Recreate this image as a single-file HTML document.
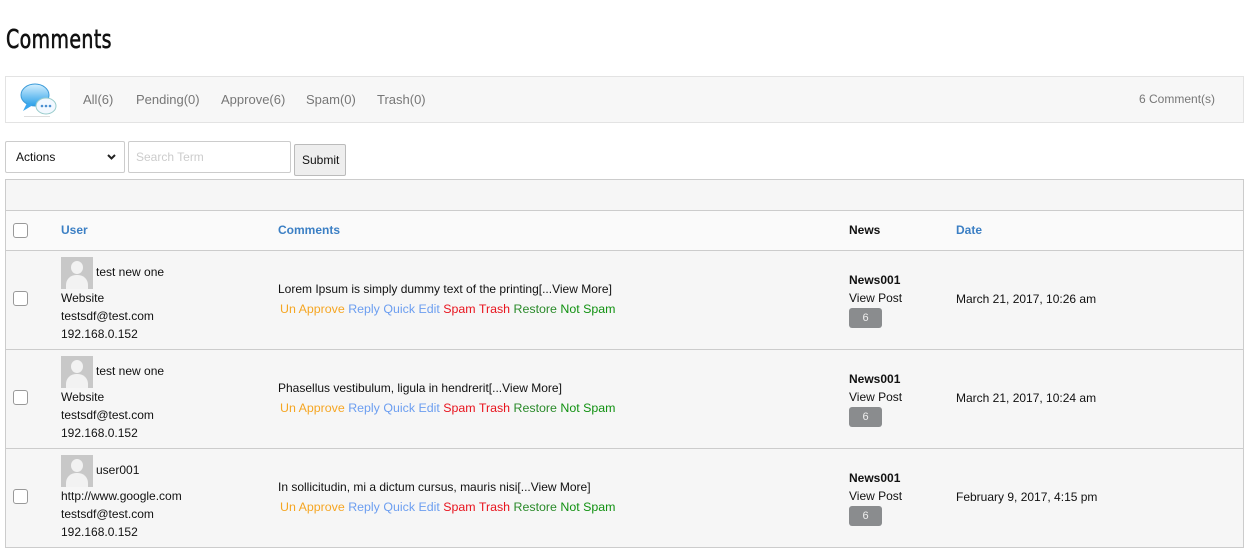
<!DOCTYPE html>
<html><head><style>
body{margin:0;width:1260px;height:548px;background:#fff;font-family:"Liberation Sans",sans-serif;font-size:12px;color:#111;position:relative;overflow:hidden}
.a{position:absolute;white-space:nowrap;line-height:14px}
h1{position:absolute;left:6px;top:25px;margin:0;font-family:"DejaVu Sans Condensed","Liberation Sans Narrow",sans-serif;font-weight:normal;font-size:26px;letter-spacing:0.5px;color:#111;-webkit-text-stroke:0.6px #111;transform:scaleX(0.81);transform-origin:left}
.nav{position:absolute;left:5px;top:76px;width:1237px;height:45px;background:#f7f7f7;border:1px solid #e3e3e3}
.nav .l{position:absolute;top:15px;color:#777;font-size:13px}
.tbl{position:absolute;left:5px;top:179px;width:1237px;height:367px;border:1px solid #ccc;background:#f6f6f6}
.hl{position:absolute;left:0;width:1237px;height:1px;background:#ccc}
.cb{position:absolute;width:13px;height:13px;border:1px solid #999;border-radius:3px;background:#fff}
.av{position:absolute;width:32px;height:32px;background:#c8c8c8;overflow:hidden}
.av:before{content:"";position:absolute;left:10px;top:4px;width:12px;height:13px;border-radius:50%;background:#f2f2f2}
.av:after{content:"";position:absolute;left:5px;top:18px;width:22px;height:20px;border-radius:10px 10px 0 0;background:#f2f2f2}
.bd{position:absolute;width:33px;height:20px;background:#8a8c8e;border-radius:3px;color:#eee;text-align:center;line-height:20px;font-size:11px}
.o{color:#f5a623}.b{color:#6c9ef0}.r{color:#e8141e}.g{color:#2a8a2a}.g2{color:#119111}
.act{font-size:12.4px}
</style></head><body>
<h1>Comments</h1>
<div class="nav">
<div style="position:absolute;left:0;top:0;width:64px;height:45px;background:#fff"></div>
<svg style="position:absolute;left:12px;top:3px" width="40" height="40" viewBox="0 0 40 40">
<defs><linearGradient id="g1" x1="0" y1="0" x2="0" y2="1"><stop offset="0" stop-color="#d6f0ff"/><stop offset="1" stop-color="#2aa0e8"/></linearGradient></defs>
<ellipse cx="17" cy="15" rx="14" ry="11" fill="url(#g1)" stroke="#3a9ad8"/>
<path d="M9 23 L5 31 L15 25Z" fill="#3aa6ee"/>
<ellipse cx="28" cy="26" rx="10" ry="8" fill="#f2f8ff" stroke="#9cc"/>
<circle cx="24" cy="26" r="1.3" fill="#4a8ed0"/><circle cx="28" cy="26" r="1.3" fill="#4a8ed0"/><circle cx="32" cy="26" r="1.3" fill="#4a8ed0"/>
<rect x="6" y="36" width="26" height="1" fill="#ddd"/>
</svg>
<span class="l" style="left:77px">All(6)</span>
<span class="l" style="left:130px">Pending(0)</span>
<span class="l" style="left:215px">Approve(6)</span>
<span class="l" style="left:300px">Spam(0)</span>
<span class="l" style="left:371px">Trash(0)</span>
<span class="l" style="left:1133px;font-size:12px">6 Comment(s)</span>
</div>
<div style="position:absolute;left:5px;top:141px;width:118px;height:30px;border:1px solid #ccc;border-radius:2px;background:#fff"><span class="a" style="left:10px;top:8px">Actions</span><svg style="position:absolute;right:8px;top:12px" width="9" height="6"><path d="M1 1L4.5 4.5L8 1" stroke="#222" stroke-width="2" fill="none"/></svg></div>
<div style="position:absolute;left:128px;top:141px;width:161px;height:30px;border:1px solid #ccc;border-radius:2px;background:#fff"><span class="a" style="left:7px;top:8px;color:#ccc">Search Term</span></div>
<div style="position:absolute;left:294px;top:144px;width:50px;height:30px;border:1px solid #bbb;border-radius:2px;background:#eee"><span class="a" style="left:7px;top:8px">Submit</span></div>
<div class="tbl">
<div class="hl" style="top:30px"></div>
<div style="position:absolute;top:31px;left:0;width:1237px;height:39px;background:#fafafa"></div>
<div class="hl" style="top:70px"></div>
<div class="cb" style="left:7px;top:43px"></div>
<span class="a" style="left:55px;top:43px;color:#3b7fc4;font-weight:bold">User</span>
<span class="a" style="left:272px;top:43px;color:#3b7fc4;font-weight:bold">Comments</span>
<span class="a" style="left:843px;top:43px;font-weight:bold">News</span>
<span class="a" style="left:950px;top:43px;color:#3b7fc4;font-weight:bold">Date</span>
<div class="hl" style="top:169px"></div>
<div class="hl" style="top:268px"></div>
</div>
<div id="rows"></div>
<script>
var d=[["test new one","Website","Lorem Ipsum is simply dummy text of the printing","March 21, 2017, 10:26 am"],["test new one","Website","Phasellus vestibulum, ligula in hendrerit","March 21, 2017, 10:24 am"],["user001","http://www.google.com","In sollicitudin, mi a dictum cursus, mauris nisi","February 9, 2017, 4:15 pm"]];
var h="";d.forEach(function(r,i){var t=251+99*i;
h+='<div class="cb" style="left:13px;top:'+(t+40)+'px"></div>'+
'<div class="av" style="left:61px;top:'+(t+6)+'px"></div>'+
'<span class="a" style="left:96px;top:'+(t+14)+'px">'+r[0]+'</span>'+
'<span class="a" style="left:61px;top:'+(t+40)+'px">'+r[1]+'</span>'+
'<span class="a" style="left:61px;top:'+(t+58)+'px">testsdf@test.com</span>'+
'<span class="a" style="left:61px;top:'+(t+76)+'px">192.168.0.152</span>'+
'<span class="a" style="left:278px;top:'+(t+31)+'px">'+r[2]+'[...View More]</span>'+
'<span class="a act" style="left:280px;top:'+(t+51)+'px"><span class="o">Un Approve</span> <span class="b">Reply</span> <span class="b">Quick Edit</span> <span class="r">Spam</span> <span class="r">Trash</span> <span class="g">Restore</span> <span class="g2">Not Spam</span></span>'+
'<span class="a" style="left:849px;top:'+(t+22)+'px;font-weight:bold">News001</span>'+
'<span class="a" style="left:849px;top:'+(t+40)+'px">View Post</span>'+
'<div class="bd" style="left:849px;top:'+(t+57)+'px">6</div>'+
'<span class="a" style="left:956px;top:'+(t+41)+'px">'+r[3]+'</span>';});
document.getElementById("rows").innerHTML=h;
</script>
</body></html>
